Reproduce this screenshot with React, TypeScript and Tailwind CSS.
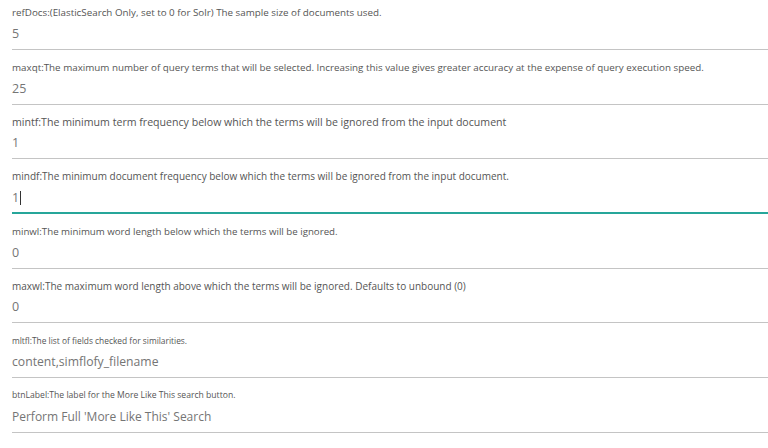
import React from "react";

const rows: { label: string; value: string; focused?: boolean; lc: string; vc: string }[] = [
  { label: "refDocs:(ElasticSearch Only, set to 0 for Solr) The sample size of documents used.", value: "5", lc: "text-[9.8px]", vc: "text-[12.5px]" },
  { label: "maxqt:The maximum number of query terms that will be selected. Increasing this value gives greater accuracy at the expense of query execution speed.", value: "25", lc: "text-[9.8px]", vc: "text-[12.5px]" },
  { label: "mintf:The minimum term frequency below which the terms will be ignored from the input document", value: "1", lc: "text-[10.6px]", vc: "text-[12.5px]" },
  { label: "mindf:The minimum document frequency below which the terms will be ignored from the input document.", value: "1", focused: true, lc: "text-[10px]", vc: "text-[12.5px]" },
  { label: "minwl:The minimum word length below which the terms will be ignored.", value: "0", lc: "text-[9.7px]", vc: "text-[12.5px]" },
  { label: "maxwl:The maximum word length above which the terms will be ignored. Defaults to unbound (0)", value: "0", lc: "text-[10px]", vc: "text-[12.5px]" },
  { label: "mltfl:The list of fields checked for similarities.", value: "content,simflofy_filename", lc: "text-[8.4px]", vc: "text-[12.2px]" },
  { label: "btnLabel:The label for the More Like This search button.", value: "Perform Full 'More Like This' Search", lc: "text-[8.6px]", vc: "text-[12px]" },
];

export default function App() {
  return (
    <div className="w-[768px] h-[448px] overflow-hidden bg-white" style={{ fontFamily: "'Open Sans', 'Liberation Sans', sans-serif" }}>
      <div className="-mt-[4.67px] pl-[12px]">
        {rows.map((r, i) => (
          <div key={i} className="flex flex-col pt-[11px]">
            <div className={`${r.lc} h-[13px] leading-[13px] text-[#555] whitespace-nowrap`}>{r.label}</div>
            <div className={`mt-[4.67px] h-[20px] leading-[20px] ${r.vc} text-[#757575] flex items-center`}>
              <span>{r.value}</span>
              {r.focused && <span className="inline-block w-px h-[14px] bg-[#333] ml-[1px]" />}
            </div>
            {r.focused ? (
              <div className="mt-[4px] h-[2px] bg-[#26a69a]" />
            ) : (
              <div className="mt-[5px] h-px bg-[#c4c4c4]" />
            )}
          </div>
        ))}
      </div>
    </div>
  );
}
